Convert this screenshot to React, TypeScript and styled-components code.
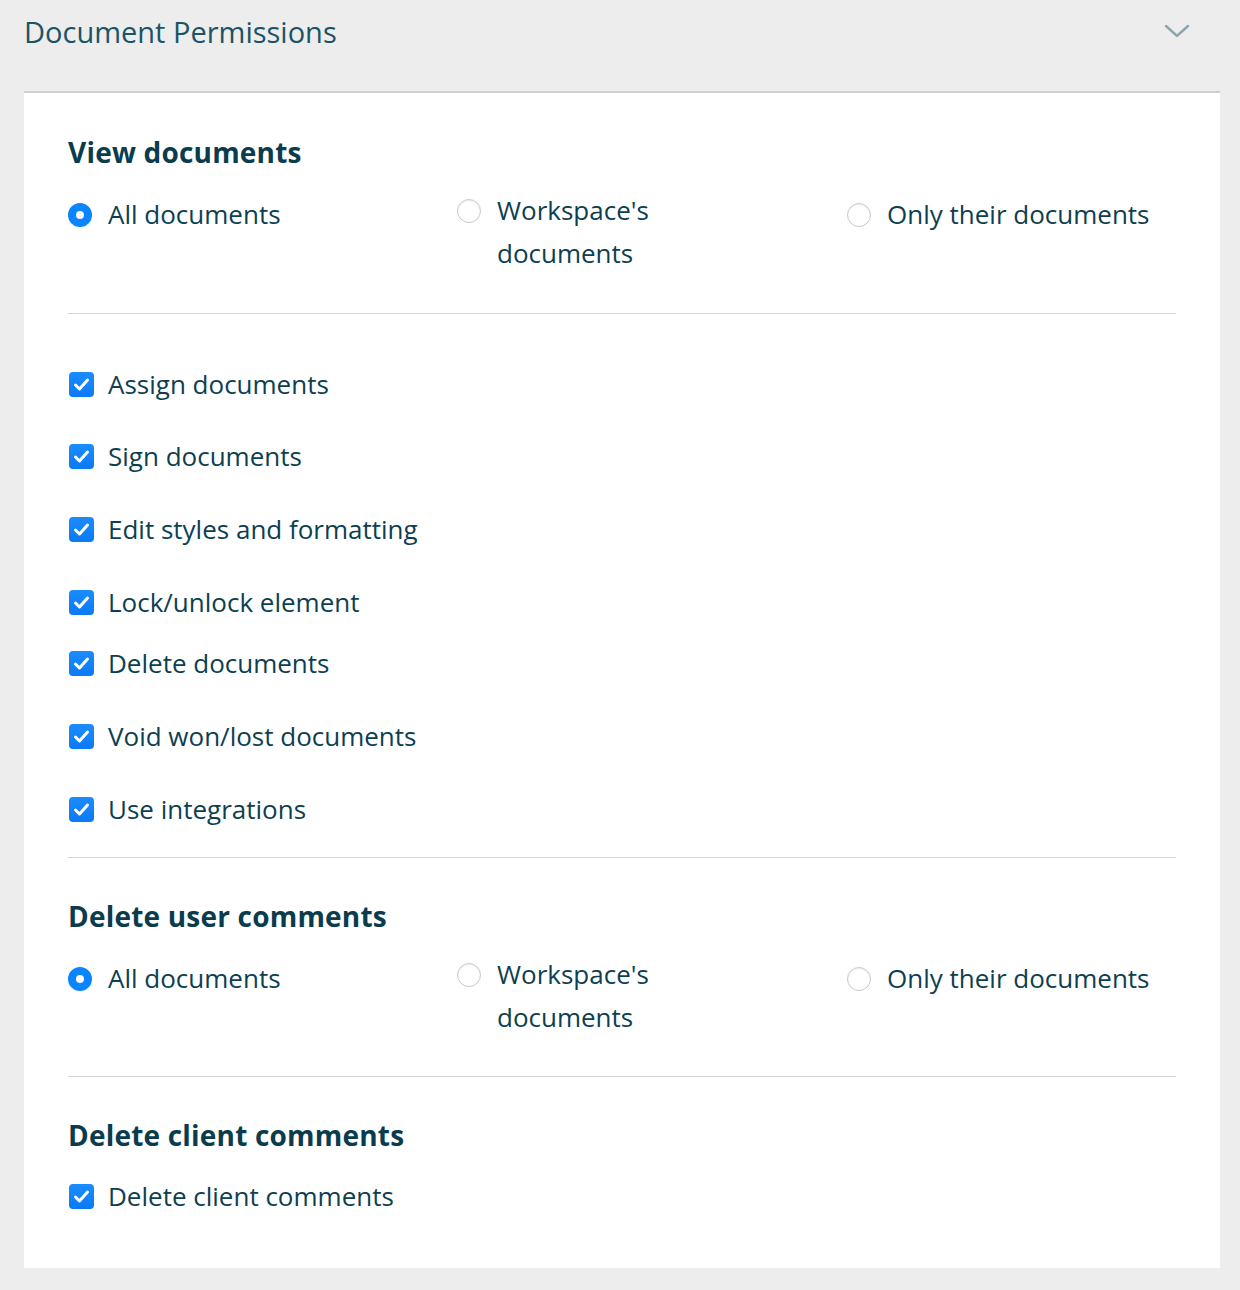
import styled, { createGlobalStyle } from 'styled-components';

const GlobalStyle = createGlobalStyle`
	body {
		margin: 0;
		background: #ededed;
		font-family: 'Open Sans', Lato, sans-serif;
		color: #0d3f51;
	}
`;

const Page = styled.div`
	width: 1196px;
	padding: 0 20px 23px 24px;
`;

const Header = styled.div`
	display: flex;
	align-items: center;
	justify-content: space-between;
	height: 62px;
	margin-bottom: 29px;
	padding-right: 30px;
`;

const Title = styled.h1`
	margin: 0;
	font-size: 29px;
	font-weight: 400;
	color: #1a5466;
`;

const Card = styled.div`
	background: #fff;
	border-top: 2px solid #cfcfcf;
	padding: 41px 44px 50px;
`;

const Section = styled.div<{ last?: boolean; top?: number; bottom?: number }>`
	padding-top: ${(p) => p.top ?? 0}px;
	padding-bottom: ${(p) => (p.last ? 0 : p.bottom ?? 38)}px;
	margin-bottom: ${(p) => (p.last ? 0 : 40)}px;
	border-bottom: ${(p) => (p.last ? 'none' : '1px solid #d4d4d4')};
`;

const Heading = styled.h2`
	margin: 0 0 22px;
	font-size: 28px;
	line-height: 36px;
	font-weight: 700;
	letter-spacing: 0.2px;
	color: #0a3c4e;
`;

const RadioRow = styled.div`
	display: grid;
	grid-template-columns: 389px 390px auto;
	align-items: start;
`;

const Option = styled.label<{ wrap?: boolean }>`
	display: flex;
	align-items: flex-start;
	gap: 16px;
	font-size: 26px;
	line-height: 43px;
	margin-top: ${(p) => (p.wrap ? -3 : 1)}px;
	max-width: ${(p) => (p.wrap ? '200px' : 'none')};
`;

const Radio = styled.span<{ checked?: boolean }>`
	flex: none;
	box-sizing: border-box;
	width: 24px;
	height: 24px;
	margin-top: 10px;
	border-radius: 50%;
	background: #fff;
	border: ${(p) => (p.checked ? '8px solid #0a84ff' : '1px solid #c9c9c9')};
	box-shadow: ${(p) => (p.checked ? 'none' : 'inset 0 1px 2px rgba(0,0,0,0.08)')};
`;

const CheckList = styled.div`
	display: flex;
	flex-direction: column;
`;

const CheckRow = styled.label<{ gap?: number }>`
	display: flex;
	align-items: center;
	gap: 14px;
	font-size: 26px;
	line-height: 43px;
	margin-top: ${(p) => p.gap ?? 0}px;
	padding-left: 1px;
`;

const Box = styled.span`
	flex: none;
	display: flex;
	align-items: center;
	justify-content: center;
	width: 25px;
	height: 25px;
	border-radius: 4px;
	background: linear-gradient(#1a8cff, #0a7af5);
`;

const Check = () => (
	<Box>
		<svg width="25" height="25" viewBox="0 0 25 25">
			<path d="M6.5 13l4 4L18.5 8" fill="none" stroke="#fff" strokeWidth="3" strokeLinecap="round" strokeLinejoin="round" />
		</svg>
	</Box>
);

const Chevron = () => (
	<svg width="26" height="16" viewBox="0 0 26 16">
		<path d="M2 3l11 10L24 3" fill="none" stroke="#8fa3ad" strokeWidth="2.4" strokeLinecap="round" />
	</svg>
);

const scopeOptions = ['All documents', "Workspace's documents", 'Only their documents'];

const Scope = () => (
	<RadioRow>
		{scopeOptions.map((o, i) => (
			<Option key={o} wrap={i === 1}>
				<Radio checked={i === 0} />
				<span>{o}</span>
			</Option>
		))}
	</RadioRow>
);

const checks: [string, number][] = [
	['Assign documents', 0],
	['Sign documents', 29],
	['Edit styles and formatting', 30],
	['Lock/unlock element', 30],
	['Delete documents', 18],
	['Void won/lost documents', 30],
	['Use integrations', 30],
];

export default function App() {
	return (
		<>
			<GlobalStyle />
			<Page>
				<Header>
					<Title>Document Permissions</Title>
					<Chevron />
				</Header>
				<Card>
					<Section>
						<Heading>View documents</Heading>
						<Scope />
					</Section>
					<Section top={9} bottom={26}>
						<CheckList>
							{checks.map(([label, gap]) => (
								<CheckRow key={label} gap={gap}>
									<Check />
									{label}
								</CheckRow>
							))}
						</CheckList>
					</Section>
					<Section bottom={37}>
						<Heading>Delete user comments</Heading>
						<Scope />
					</Section>
					<Section last>
						<Heading>Delete client comments</Heading>
						<CheckRow>
							<Check />
							Delete client comments
						</CheckRow>
					</Section>
				</Card>
			</Page>
		</>
	);
}
